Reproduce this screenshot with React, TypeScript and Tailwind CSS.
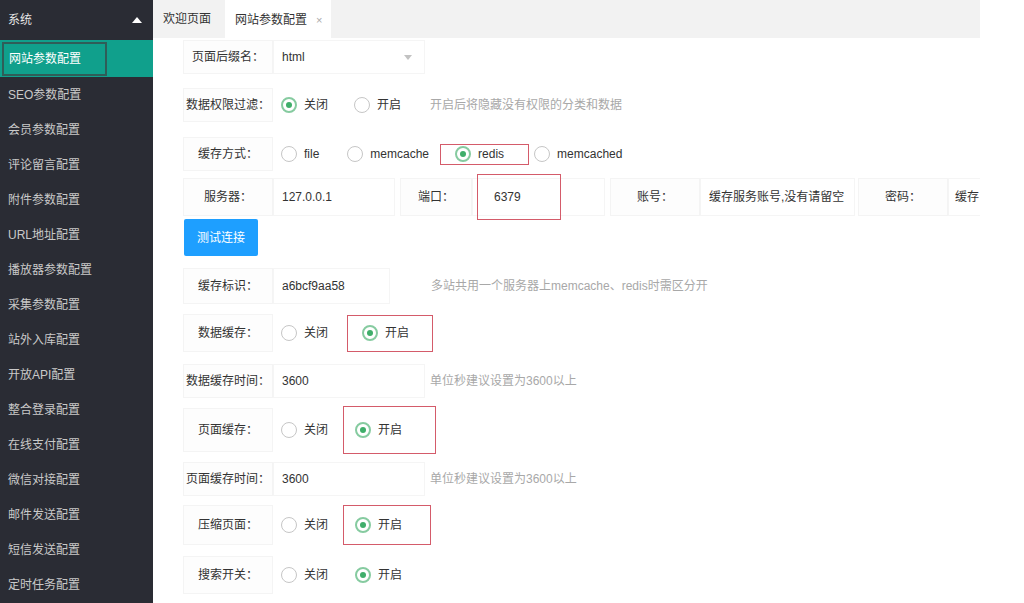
import React from "react";

const font = { fontFamily: '"Liberation Sans", "Noto Sans CJK SC", sans-serif' };

const menu = [
  "SEO参数配置",
  "会员参数配置",
  "评论留言配置",
  "附件参数配置",
  "URL地址配置",
  "播放器参数配置",
  "采集参数配置",
  "站外入库配置",
  "开放API配置",
  "整合登录配置",
  "在线支付配置",
  "微信对接配置",
  "邮件发送配置",
  "短信发送配置",
  "定时任务配置",
];

function Radio({ checked, label, className = "" }: { checked?: boolean; label: string; className?: string }) {
  return (
    <div className={"flex items-center shrink-0 " + className}>
      <span
        className={
          "w-4 h-4 rounded-full flex items-center justify-center shrink-0 " +
          (checked ? "border-2 border-[#86cba0]" : "border border-[#c6c6c6]")
        }
      >
        {checked && <span className="w-[6px] h-[6px] rounded-full bg-[#3fae6a]" />}
      </span>
      <span className="ml-[7px] text-[#333] whitespace-nowrap">{label}</span>
    </div>
  );
}

function Label({ children, w = "w-[90px]", className = "" }: { children: React.ReactNode; w?: string; className?: string }) {
  return (
    <div
      className={
        w +
        " h-full shrink-0 flex items-center justify-center border border-[#f4f4f4] bg-[#fdfdfd] text-[#333] whitespace-nowrap " +
        className
      }
    >
      {children}
    </div>
  );
}

function Input({ children, w, className = "" }: { children?: React.ReactNode; w: string; className?: string }) {
  return (
    <div
      className={
        w + " h-full shrink-0 flex items-center pl-2 border border-[#f5f5f5] text-[#333] whitespace-nowrap overflow-hidden " + className
      }
    >
      {children}
    </div>
  );
}

export default function App() {
  return (
    <div className="w-[1024px] h-[603px] flex bg-white overflow-hidden text-[12px]" style={font}>
      {/* Sidebar */}
      <div className="w-[153px] h-full bg-[#2a2c34] flex flex-col shrink-0">
        <div className="h-10 shrink-0 flex items-center justify-between pl-2 pr-[8px] text-[#e6e6e6]">
          <span>系统</span>
          <span className="w-0 h-0 border-l-[5px] border-r-[5px] border-b-[6px] border-l-transparent border-r-transparent border-b-white mr-[3px]" />
        </div>
        <div className="h-[37px] shrink-0 bg-[#10a08c] flex items-center">
          <div className="ml-[2px] w-[105px] h-[34px] border-2 border-[#2f5d58] flex items-center pl-[5px] text-white">
            网站参数配置
          </div>
        </div>
        {menu.map((m) => (
          <div key={m} className="h-[35px] shrink-0 flex items-center pl-2 text-[#c9c9c9]">
            {m}
          </div>
        ))}
      </div>

      {/* Main */}
      <div className="w-[827px] h-full flex flex-col shrink-0 overflow-hidden">
        <div className="h-[38px] bg-[#f2f2f2] flex items-end shrink-0">
          <div className="h-full flex items-center pl-[10px] pr-[14px] text-[#333] whitespace-nowrap">欢迎页面</div>
          <div className="h-[40px] -mb-[2px] bg-white flex items-center pl-[10px] text-[#333] w-[106px] whitespace-nowrap">
            <span>网站参数配置</span>
            <span className="ml-[9px] text-[#aaa] text-[11px]">×</span>
          </div>
        </div>

        <div className="pl-[30px] flex flex-col">
          {/* Row1 */}
          <div className="h-[34px] mt-[2px] flex items-center">
            <Label>页面后缀名：</Label>
            <Input w="w-[152px]" className="justify-between pr-[12px]">
              <span>html</span>
              <span className="w-0 h-0 border-l-[4px] border-r-[4px] border-t-[5px] border-l-transparent border-r-transparent border-t-[#c2c2c2]" />
            </Input>
          </div>

          {/* Row2 */}
          <div className="h-[34px] mt-[14px] flex items-center">
            <Label>数据权限过滤：</Label>
            <Radio checked label="关闭" className="ml-[8px]" />
            <Radio label="开启" className="ml-[26px]" />
            <span className="ml-[29px] text-[#a8a8a8] whitespace-nowrap">开启后将隐藏没有权限的分类和数据</span>
          </div>

          {/* Row3 */}
          <div className="h-[34px] mt-[15px] flex items-center">
            <Label>缓存方式：</Label>
            <Radio label="file" className="ml-[8px]" />
            <Radio label="memcache" className="ml-[28px]" />
            <div className="ml-[11px] h-[21px] shrink-0 border border-[#d45b6a] flex items-center pl-[14px] pr-[24px]">
              <Radio checked label="redis" />
            </div>
            <Radio label="memcached" className="ml-[5px]" />
          </div>

          {/* Row4 */}
          <div className="h-[38px] mt-[7px] flex items-center">
            <Label>服务器：</Label>
            <Input w="w-[122px]">127.0.0.1</Input>
            <Label w="w-[72px]" className="ml-[5px]">端口：</Label>
            <div className="w-[133px] h-full shrink-0 flex items-center border border-[#f5f5f5]">
              <div className="ml-[4px] w-[84px] h-[46px] shrink-0 border border-[#d45b6a] flex items-center pl-[16px] text-[#333]">
                6379
              </div>
            </div>
            <Label w="w-[90px]" className="ml-[5px]">账号：</Label>
            <Input w="w-[155px]" className="text-[#9a9a9a]">缓存服务账号,没有请留空</Input>
            <Label w="w-[90px]" className="ml-[3px]">密码：</Label>
            <Input w="w-[32px]" className="text-[#9a9a9a] pl-[6px] border-r-0">缓存</Input>
          </div>

          {/* Button */}
          <div className="mt-[3px] flex">
            <div className="w-[74px] h-[37px] ml-[1px] bg-[#1e9fff] rounded-[2px] flex items-center justify-center text-white">
              测试连接
            </div>
          </div>

          {/* Row6 */}
          <div className="h-[36px] mt-[12px] flex items-center">
            <Label>缓存标识：</Label>
            <Input w="w-[117px]">a6bcf9aa58</Input>
            <span className="ml-[41px] text-[#a8a8a8] whitespace-nowrap">多站共用一个服务器上memcache、redis时需区分开</span>
          </div>

          {/* Row7 */}
          <div className="h-[38px] mt-[10px] flex items-center">
            <Label>数据缓存：</Label>
            <Radio label="关闭" className="ml-[8px]" />
            <div className="ml-[19px] h-[37px] shrink-0 border border-[#d45b6a] flex items-center pl-[14px] pr-[23px]">
              <Radio checked label="开启" />
            </div>
          </div>

          {/* Row8 */}
          <div className="h-[34px] mt-[12px] flex items-center">
            <Label>数据缓存时间：</Label>
            <Input w="w-[152px]">3600</Input>
            <span className="ml-[5px] text-[#a8a8a8] whitespace-nowrap">单位秒建议设置为3600以上</span>
          </div>

          {/* Row9 */}
          <div className="h-[44px] mt-[10px] flex items-center">
            <Label>页面缓存：</Label>
            <Radio label="关闭" className="ml-[8px]" />
            <div className="ml-[15px] h-[48px] shrink-0 border border-[#d45b6a] flex items-center pl-[11px] pr-[33px]">
              <Radio checked label="开启" />
            </div>
          </div>

          {/* Row10 */}
          <div className="h-[34px] mt-[10px] flex items-center">
            <Label>页面缓存时间：</Label>
            <Input w="w-[152px]">3600</Input>
            <span className="ml-[5px] text-[#a8a8a8] whitespace-nowrap">单位秒建议设置为3600以上</span>
          </div>

          {/* Row11 */}
          <div className="h-[40px] mt-[9px] flex items-center">
            <Label>压缩页面：</Label>
            <Radio label="关闭" className="ml-[8px]" />
            <div className="ml-[15px] h-[40px] shrink-0 border border-[#d45b6a] flex items-center pl-[11px] pr-[28px]">
              <Radio checked label="开启" />
            </div>
          </div>

          {/* Row12 */}
          <div className="h-[38px] mt-[11px] flex items-center">
            <Label>搜索开关：</Label>
            <Radio label="关闭" className="ml-[8px]" />
            <Radio checked label="开启" className="ml-[27px]" />
          </div>
        </div>
      </div>
    </div>
  );
}
